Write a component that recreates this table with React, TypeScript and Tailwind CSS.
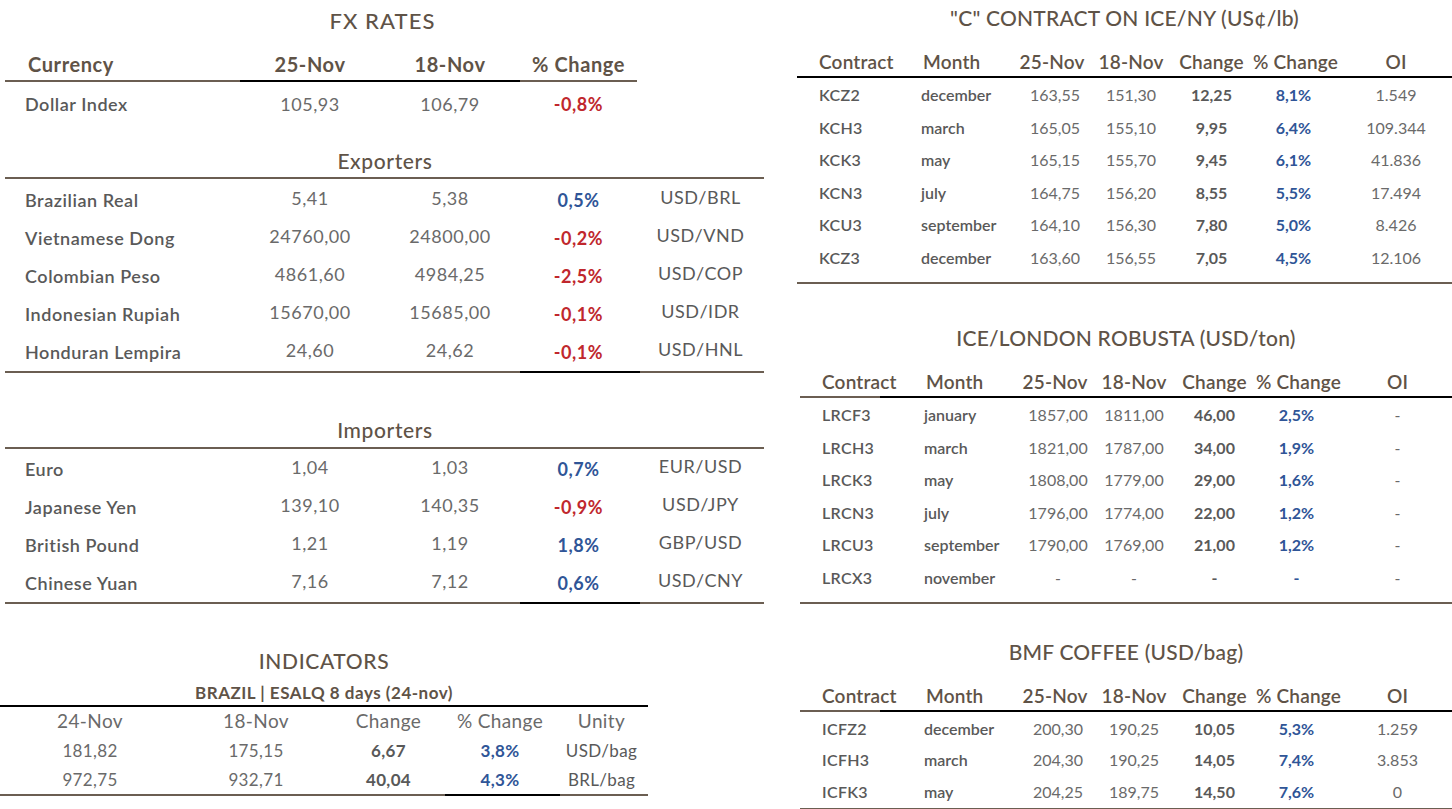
import React from "react";

const BROWN = "#6b5e52";
const BLACK = "#000000";

type Seg = [number, string];

function Line({ segs, className = "" }: { segs: Seg[]; className?: string }) {
  return (
    <div className={`flex h-[2px] ${className}`}>
      {segs.map(([w, c], i) => (
        <div key={i} className="h-full shrink-0" style={{ width: w, background: c }} />
      ))}
    </div>
  );
}

function pctColor(v: string) {
  if (v === "-") return "text-[#2f5597]";
  return v.startsWith("-") ? "text-[#c0272d]" : "text-[#2f5597]";
}

const exporters = [
  ["Brazilian Real", "5,41", "5,38", "0,5%", "USD/BRL"],
  ["Vietnamese Dong", "24760,00", "24800,00", "-0,2%", "USD/VND"],
  ["Colombian Peso", "4861,60", "4984,25", "-2,5%", "USD/COP"],
  ["Indonesian Rupiah", "15670,00", "15685,00", "-0,1%", "USD/IDR"],
  ["Honduran Lempira", "24,60", "24,62", "-0,1%", "USD/HNL"],
];

const importers = [
  ["Euro", "1,04", "1,03", "0,7%", "EUR/USD"],
  ["Japanese Yen", "139,10", "140,35", "-0,9%", "USD/JPY"],
  ["British Pound", "1,21", "1,19", "1,8%", "GBP/USD"],
  ["Chinese Yuan", "7,16", "7,12", "0,6%", "USD/CNY"],
];

const cContract = [
  ["KCZ2", "december", "163,55", "151,30", "12,25", "8,1%", "1.549"],
  ["KCH3", "march", "165,05", "155,10", "9,95", "6,4%", "109.344"],
  ["KCK3", "may", "165,15", "155,70", "9,45", "6,1%", "41.836"],
  ["KCN3", "july", "164,75", "156,20", "8,55", "5,5%", "17.494"],
  ["KCU3", "september", "164,10", "156,30", "7,80", "5,0%", "8.426"],
  ["KCZ3", "december", "163,60", "156,55", "7,05", "4,5%", "12.106"],
];

const robusta = [
  ["LRCF3", "january", "1857,00", "1811,00", "46,00", "2,5%", "-"],
  ["LRCH3", "march", "1821,00", "1787,00", "34,00", "1,9%", "-"],
  ["LRCK3", "may", "1808,00", "1779,00", "29,00", "1,6%", "-"],
  ["LRCN3", "july", "1796,00", "1774,00", "22,00", "1,2%", "-"],
  ["LRCU3", "september", "1790,00", "1769,00", "21,00", "1,2%", "-"],
  ["LRCX3", "november", "-", "-", "-", "-", "-"],
];

const bmf = [
  ["ICFZ2", "december", "200,30", "190,25", "10,05", "5,3%", "1.259"],
  ["ICFH3", "march", "204,30", "190,25", "14,05", "7,4%", "3.853"],
  ["ICFK3", "may", "204,25", "189,75", "14,50", "7,6%", "0"],
];

const FX_COLS = "grid grid-cols-[235px_140px_140px_117px_127px]";
const LIGHT = "font-normal text-[#6a6a6a]";

function FxRows({ rows }: { rows: string[][] }) {
  return (
    <div>
      {rows.map((r) => (
        <div key={r[0]} className={`${FX_COLS} h-[38px] items-center text-[18px] tracking-[0.03em]`}>
          <div className="pl-[20px] font-semibold text-[#595959]">{r[0]}</div>
          <div className={`text-center -mt-[3px] ${LIGHT}`}>{r[1]}</div>
          <div className={`text-center -mt-[3px] ${LIGHT}`}>{r[2]}</div>
          <div className={`text-center font-bold ${pctColor(r[3])}`}>{r[3]}</div>
          <div className="text-center font-normal text-[#595959] -mt-[5px]">{r[4]}</div>
        </div>
      ))}
    </div>
  );
}

function SectionTitle({ children, className = "" }: { children: React.ReactNode; className?: string }) {
  return (
    <div
      className={`flex items-end justify-center text-[21px] font-medium tracking-[0.03em] text-[#5f5347] ${className}`}
    >
      {children}
    </div>
  );
}

const C_COLS = "grid grid-cols-[115px_100px_80px_78px_83px_87px_112px]";
const C_COLS_R = "grid grid-cols-[115px_100px_80px_78px_83px_87px_109px]";

function ContractTable({
  title,
  rows,
  cols,
  headerLine,
  rowH,
  gapTop,
  last,
}: {
  title: string;
  rows: string[][];
  cols: string;
  headerLine: Seg[];
  rowH: string;
  gapTop: string;
  last?: boolean;
}) {
  return (
    <div className={gapTop}>
      <div className="flex h-[36px] items-center justify-center text-[21px] font-medium tracking-[0.01em] text-[#5f5347]">
        {title}
      </div>
      <div
        className={`${cols} h-[40px] items-end pb-[0px] text-[19px] font-semibold tracking-[0.01em] text-[#5f5347] whitespace-nowrap`}
      >
        <div className="pl-[22px]">Contract</div>
        <div className="pl-[11px]">Month</div>
        <div className="text-center">25-Nov</div>
        <div className="text-center">18-Nov</div>
        <div className="text-center">Change</div>
        <div className="text-left">% Change</div>
        <div className="text-center">OI</div>
      </div>
      <Line segs={headerLine} />
      <div className={`pt-[1px] ${last ? "" : "pb-[8px]"}`}>
        {rows.map((r, i) => (
          <div key={r[0] + i} className={`${cols} ${rowH} items-center text-[16px] text-[#595959]`}>
            <div className="pl-[22px] font-semibold tracking-[0.02em]">{r[0]}</div>
            <div className="pl-[9px] font-semibold">{r[1]}</div>
            <div className={`text-center pl-[6px] ${LIGHT}`}>{r[2]}</div>
            <div className={`text-center ${LIGHT}`}>{r[3]}</div>
            <div className="text-center font-bold">{r[4]}</div>
            <div className={`text-center font-bold pr-[6px] ${pctColor(r[5])}`}>{r[5]}</div>
            <div className={`text-center ${LIGHT}`}>{r[6]}</div>
          </div>
        ))}
      </div>
      <Line segs={[[655, BROWN]]} />
    </div>
  );
}

export default function App() {
  return (
    <div
      className="flex h-[809px] w-[1452px] overflow-hidden bg-white"
      style={{ fontFamily: "Lato, 'Open Sans', sans-serif" }}
    >
      {/* left column */}
      <div className="w-[765px] shrink-0">
        <div className="flex h-[40px] items-center justify-center text-[22px] font-medium tracking-[0.05em] text-[#5f5347]">
          FX RATES
        </div>
        <div className="pl-[5px]">
          <div
            className={`${FX_COLS} h-[40px] items-end pb-[1px] text-[20px] font-bold tracking-[0.03em] text-[#5f5347]`}
          >
            <div className="pl-[23px]">Currency</div>
            <div className="text-center">25-Nov</div>
            <div className="text-center">18-Nov</div>
            <div className="text-center">% Change</div>
            <div />
          </div>
          <Line segs={[[235, BROWN], [280, BLACK], [117, BROWN]]} />
          <div className={`${FX_COLS} h-[44px] items-center text-[18px] tracking-[0.03em]`}>
            <div className="pl-[20px] font-semibold text-[#595959]">Dollar Index</div>
            <div className={`text-center ${LIGHT}`}>105,93</div>
            <div className={`text-center ${LIGHT}`}>106,79</div>
            <div className="text-center font-bold text-[#c0272d]">-0,8%</div>
            <div />
          </div>

          <SectionTitle className="h-[51px] pb-[1px]">Exporters</SectionTitle>
          <Line segs={[[759, BROWN]]} />
          <div className="pt-[2px]">
            <FxRows rows={exporters} />
          </div>
          <Line segs={[[515, BROWN], [120, BLACK], [124, BROWN]]} />

          <SectionTitle className="h-[74px] pb-[2px]">Importers</SectionTitle>
          <Line segs={[[759, BROWN]]} />
          <div className="pt-[1px]">
            <FxRows rows={importers} />
          </div>
          <Line segs={[[515, BROWN], [120, BLACK], [124, BROWN]]} />
        </div>

        {/* indicators */}
        <div className="w-[648px]">
          <SectionTitle className="h-[72px] pb-[0px]">INDICATORS</SectionTitle>
          <div className="flex h-[29px] items-end justify-center text-[17px] font-bold tracking-[0.03em] text-[#5f5347]">
            BRAZIL | ESALQ 8 days (24-nov)
          </div>
          <Line segs={[[648, BLACK]]} />
          <div
            className={`grid h-[29px] grid-cols-[180px_152px_113px_110px_93px] items-center text-[19px] tracking-[0.02em] ${LIGHT}`}
          >
            <div className="text-center">24-Nov</div>
            <div className="text-center">18-Nov</div>
            <div className="text-center">Change</div>
            <div className="text-center">% Change</div>
            <div className="text-center">Unity</div>
          </div>
          {[
            ["181,82", "175,15", "6,67", "3,8%", "USD/bag"],
            ["972,75", "932,71", "40,04", "4,3%", "BRL/bag"],
          ].map((r) => (
            <div
              key={r[0]}
              className="grid h-[29px] grid-cols-[180px_152px_113px_110px_93px] items-center text-[17px] tracking-[0.02em] text-[#595959]"
            >
              <div className={`text-center ${LIGHT}`}>{r[0]}</div>
              <div className={`text-center ${LIGHT}`}>{r[1]}</div>
              <div className="text-center font-bold">{r[2]}</div>
              <div className="text-center font-bold text-[#2f5597]">{r[3]}</div>
              <div className="text-center font-normal">{r[4]}</div>
            </div>
          ))}
          <Line segs={[[445, BROWN], [115, BLACK], [88, BROWN]]} />
        </div>
      </div>

      {/* right column */}
      <div className="ml-[32px] w-[655px] shrink-0">
        <ContractTable
          title={'"C" CONTRACT ON ICE/NY (US¢/lb)'}
          rows={cContract}
          cols={C_COLS}
          headerLine={[[655, BLACK]]}
          rowH="h-[32.5px]"
          gapTop=""
        />
        <div className="pl-[3px]">
          <ContractTable
            title="ICE/LONDON ROBUSTA (USD/ton)"
            rows={robusta}
            cols={C_COLS_R}
            headerLine={[[80, BROWN], [572, BLACK]]}
            rowH="h-[32.5px]"
            gapTop="mt-[36px]"
          />
          <ContractTable
            title="BMF COFFEE (USD/bag)"
            rows={bmf}
            cols={C_COLS_R}
            headerLine={[[80, BROWN], [572, BLACK]]}
            rowH="h-[31.5px]"
            gapTop="mt-[30px]"
            last
          />
        </div>
      </div>
    </div>
  );
}
